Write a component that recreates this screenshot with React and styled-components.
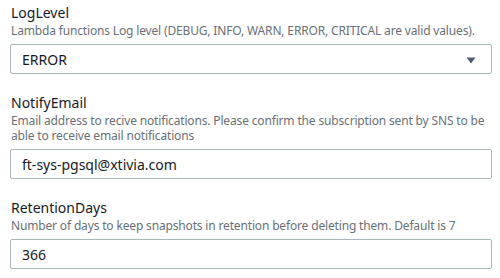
import styled, { createGlobalStyle } from "styled-components";

const GlobalStyle = createGlobalStyle`
  body {
    margin: 0;
    background: #ffffff;
    font-family: "Noto Sans", "Open Sans", sans-serif;
  }
`;

const StyledForm = styled.form`
  display: flex;
  flex-direction: column;
  gap: 19px;
  padding: 3px 9px 0 10px;
  width: 482px;
`;

const StyledField = styled.div`
  display: flex;
  flex-direction: column;
`;

const StyledLabel = styled.label`
  font-size: 14px;
  line-height: 20px;
  color: #16191f;
  padding-left: 1px;
`;

const StyledHint = styled.p`
  margin: 0 0 6px;
  font-size: 12px;
  line-height: 15px;
  color: #687078;
  padding-left: 1px;
  letter-spacing: -0.16px;
`;

const StyledBox = styled.div`
  position: relative;
  box-sizing: border-box;
  height: 30px;
  border: 1px solid #aab7b8;
  border-radius: 2px;
  display: flex;
  align-items: center;
  padding: 0 ${({ $select }) => ($select ? "32px" : "11px")} 0 11px;
  font-size: 14px;
  color: #16191f;
`;

const StyledCaret = styled.svg`
  position: absolute;
  right: 15px;
  top: 12px;
`;

const fields = [
  {
    name: "LogLevel",
    hint: "Lambda functions Log level (DEBUG, INFO, WARN, ERROR, CRITICAL are valid values).",
    value: "ERROR",
    select: true,
  },
  {
    name: "NotifyEmail",
    hint: "Email address to recive notifications. Please confirm the subscription sent by SNS to be able to receive email notifications",
    value: "ft-sys-pgsql@xtivia.com",
  },
  {
    name: "RetentionDays",
    hint: "Number of days to keep snapshots in retention before deleting them. Default is 7",
    value: "366",
  },
];

export default function App() {
  return (
    <>
      <GlobalStyle />
      <StyledForm>
        {fields.map((f) => (
          <StyledField key={f.name}>
            <StyledLabel>{f.name}</StyledLabel>
            <StyledHint>{f.hint}</StyledHint>
            <StyledBox $select={f.select}>
              {f.value}
              {f.select && (
                <StyledCaret width="10" height="7" viewBox="0 0 10 7">
                  <path d="M0.5 0.5 H9.5 L5 6.5 Z" fill="#545b74" />
                </StyledCaret>
              )}
            </StyledBox>
          </StyledField>
        ))}
      </StyledForm>
    </>
  );
}
